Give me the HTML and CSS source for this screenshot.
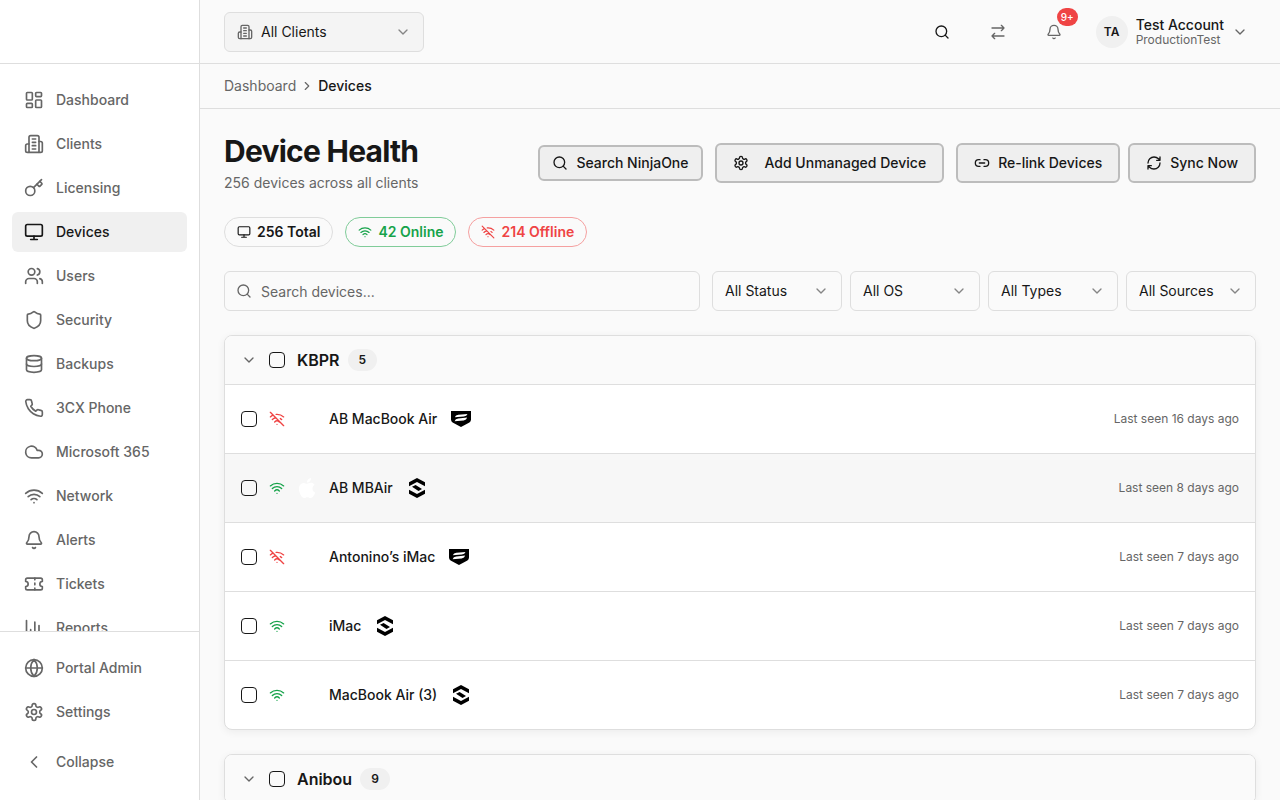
FILE: index.html
```html
<!DOCTYPE html>
<html lang="en">
<head>
<meta charset="utf-8">
<meta name="viewport" content="width=device-width, initial-scale=1">
<title>Device Health</title>
<link rel="stylesheet" href="styles.css">
</head>
<body>
<svg class="sprite" aria-hidden="true">
  <symbol id="dashboard" viewBox="0 0 24 24"><rect width="7" height="9" x="3" y="3" rx="1"/><rect width="7" height="5" x="14" y="3" rx="1"/><rect width="7" height="9" x="14" y="12" rx="1"/><rect width="7" height="5" x="3" y="16" rx="1"/></symbol>
  <symbol id="building" viewBox="0 0 24 24"><path d="M6 22V4a2 2 0 0 1 2-2h8a2 2 0 0 1 2 2v18Z"/><path d="M6 12H4a2 2 0 0 0-2 2v6a2 2 0 0 0 2 2h2"/><path d="M18 9h2a2 2 0 0 1 2 2v9a2 2 0 0 1-2 2h-2"/><path d="M10 6h4M10 10h4M10 14h4M10 18h4"/></symbol>
  <symbol id="key" viewBox="0 0 24 24"><path d="m15.5 7.5 2.3 2.3a1 1 0 0 0 1.4 0l2.1-2.1a1 1 0 0 0 0-1.4L19 4"/><path d="m21 2-9.6 9.6"/><circle cx="7.5" cy="15.5" r="5.5"/></symbol>
  <symbol id="monitor" viewBox="0 0 24 24"><rect width="20" height="14" x="2" y="3" rx="2"/><path d="M8 21h8M12 17v4"/></symbol>
  <symbol id="users" viewBox="0 0 24 24"><path d="M16 21v-2a4 4 0 0 0-4-4H6a4 4 0 0 0-4 4v2"/><circle cx="9" cy="7" r="4"/><path d="M22 21v-2a4 4 0 0 0-3-3.87M16 3.13a4 4 0 0 1 0 7.75"/></symbol>
  <symbol id="shield" viewBox="0 0 24 24"><path d="M20 13c0 5-3.5 7.5-7.66 8.95a1 1 0 0 1-.67-.01C7.5 20.5 4 18 4 13V6a1 1 0 0 1 1-1c2 0 4.5-1.2 6.24-2.72a1.17 1.17 0 0 1 1.52 0C14.51 3.81 17 5 19 5a1 1 0 0 1 1 1z"/></symbol>
  <symbol id="database" viewBox="0 0 24 24"><ellipse cx="12" cy="5" rx="9" ry="3"/><path d="M3 5v14a9 3 0 0 0 18 0V5"/><path d="M3 12a9 3 0 0 0 18 0"/></symbol>
  <symbol id="phone" viewBox="0 0 24 24"><path d="M22 16.92v3a2 2 0 0 1-2.18 2 19.79 19.79 0 0 1-8.63-3.07 19.5 19.5 0 0 1-6-6 19.79 19.79 0 0 1-3.07-8.67A2 2 0 0 1 4.11 2h3a2 2 0 0 1 2 1.72 12.84 12.84 0 0 0 .7 2.81 2 2 0 0 1-.45 2.11L8.09 9.91a16 16 0 0 0 6 6l1.27-1.27a2 2 0 0 1 2.11-.45 12.84 12.84 0 0 0 2.81.7A2 2 0 0 1 22 16.92z"/></symbol>
  <symbol id="cloud" viewBox="0 0 24 24"><path d="M17.5 19H9a7 7 0 1 1 6.71-9h1.79a4.5 4.5 0 1 1 0 9Z"/></symbol>
  <symbol id="wifi" viewBox="0 0 24 24"><path d="M12 20h.01M2 8.82a15 15 0 0 1 20 0M5 12.859a10 10 0 0 1 14 0M8.5 16.429a5 5 0 0 1 7 0"/></symbol>
  <symbol id="wifi-off" viewBox="0 0 24 24"><path d="M12 20h.01M8.5 16.429a5 5 0 0 1 7 0M5 12.859a10 10 0 0 1 5.17-2.69M19 12.859a10 10 0 0 0-2.007-1.523M2 8.82a15 15 0 0 1 4.177-2.643M22 8.82a15 15 0 0 0-11.288-3.764M2 2l20 20"/></symbol>
  <symbol id="bell" viewBox="0 0 24 24"><path d="M10.268 21a2 2 0 0 0 3.464 0"/><path d="M3.262 15.326A1 1 0 0 0 4 17h16a1 1 0 0 0 .74-1.673C19.41 13.956 18 12.499 18 8A6 6 0 0 0 6 8c0 4.499-1.411 5.956-2.738 7.326"/></symbol>
  <symbol id="ticket" viewBox="0 0 24 24"><path d="M2 9a3 3 0 0 1 0 6v2a2 2 0 0 0 2 2h16a2 2 0 0 0 2-2v-2a3 3 0 0 1 0-6V7a2 2 0 0 0-2-2H4a2 2 0 0 0-2 2Z"/><path d="M13 5v2M13 17v2M13 11v2"/></symbol>
  <symbol id="bars" viewBox="0 0 24 24"><path d="M3 3v16a2 2 0 0 0 2 2h16M8 17v-3M13 17V5M18 17V9"/></symbol>
  <symbol id="globe" viewBox="0 0 24 24"><circle cx="12" cy="12" r="10"/><path d="M12 2a14.5 14.5 0 0 0 0 20 14.5 14.5 0 0 0 0-20M2 12h20"/></symbol>
  <symbol id="gear" viewBox="0 0 24 24"><path d="M12.22 2h-.44a2 2 0 0 0-2 2v.18a2 2 0 0 1-1 1.73l-.43.25a2 2 0 0 1-2 0l-.15-.08a2 2 0 0 0-2.73.73l-.22.38a2 2 0 0 0 .73 2.73l.15.1a2 2 0 0 1 1 1.72v.51a2 2 0 0 1-1 1.74l-.15.09a2 2 0 0 0-.73 2.73l.22.38a2 2 0 0 0 2.73.73l.15-.08a2 2 0 0 1 2 0l.43.25a2 2 0 0 1 1 1.73V20a2 2 0 0 0 2 2h.44a2 2 0 0 0 2-2v-.18a2 2 0 0 1 1-1.73l.43-.25a2 2 0 0 1 2 0l.15.08a2 2 0 0 0 2.73-.73l.22-.39a2 2 0 0 0-.73-2.73l-.15-.08a2 2 0 0 1-1-1.74v-.5a2 2 0 0 1 1-1.74l.15-.09a2 2 0 0 0 .73-2.73l-.22-.38a2 2 0 0 0-2.73-.73l-.15.08a2 2 0 0 1-2 0l-.43-.25a2 2 0 0 1-1-1.73V4a2 2 0 0 0-2-2z"/><circle cx="12" cy="12" r="3"/></symbol>
  <symbol id="left" viewBox="0 0 24 24"><path d="m15 18-6-6 6-6"/></symbol>
  <symbol id="right" viewBox="0 0 24 24"><path d="m9 18 6-6-6-6"/></symbol>
  <symbol id="down" viewBox="0 0 24 24"><path d="m6 9 6 6 6-6"/></symbol>
  <symbol id="search" viewBox="0 0 24 24"><circle cx="11" cy="11" r="8"/><path d="m21 21-4.3-4.3"/></symbol>
  <symbol id="swap" viewBox="0 0 24 24"><path d="m17 2 4 4-4 4M3 6h18M7 22l-4-4 4-4M21 18H3"/></symbol>
  <symbol id="link" viewBox="0 0 24 24"><path d="M9 17H7A5 5 0 0 1 7 7h2M15 7h2a5 5 0 1 1 0 10h-2M8 12h8"/></symbol>
  <symbol id="sync" viewBox="0 0 24 24"><path d="M3 12a9 9 0 0 1 9-9 9.75 9.75 0 0 1 6.74 2.74L21 8M21 3v5h-5M21 12a9 9 0 0 1-9 9 9.75 9.75 0 0 1-6.74-2.74L3 16M8 16H3v5"/></symbol>
  <symbol id="apple" viewBox="0 0 24 24"><path d="M12.152 6.896c-.948 0-2.415-1.078-3.96-1.04-2.04.027-3.91 1.183-4.961 3.014-2.117 3.675-.546 9.103 1.519 12.09 1.013 1.454 2.208 3.09 3.792 3.039 1.52-.065 2.09-.987 3.935-.987 1.831 0 2.35.987 3.96.948 1.637-.026 2.676-1.48 3.676-2.948 1.156-1.688 1.636-3.325 1.662-3.415-.039-.013-3.182-1.221-3.22-4.857-.026-3.04 2.48-4.494 2.597-4.559-1.429-2.09-3.623-2.324-4.39-2.376-2-.156-3.675 1.09-4.61 1.09zM15.53 3.83c.843-1.012 1.4-2.427 1.245-3.83-1.207.052-2.662.805-3.532 1.818-.78.896-1.454 2.338-1.273 3.714 1.338.104 2.715-.688 3.559-1.701"/></symbol>
  <symbol id="badge-shield" viewBox="0 0 20 20"><path fill-rule="evenodd" d="M0 2H20V10.600Q20 12.500 18.400 13.400L10 18L1.600 13.400Q0 12.500 0 10.600ZM3.800 8.300Q4.600 6 7.300 5.700L16.500 5Q15.800 7.200 12.800 7.600ZM3.600 12.200Q4.400 9.900 7.200 9.500L16.200 8.600Q15.500 11.100 12.700 11.500Z"/></symbol>
  <symbol id="badge-hex" viewBox="0 0 20 20"><path d="M2 4.300 10 0l8 4.300v3.900l-8-4.100-8 4.100ZM5 8.700 8.600 6.900 15 10.900 11.500 13ZM2 11.800l8 4.100 8-4.100v3.900L10 20l-8-4.300Z"/></symbol>
</svg>

<div class="app">
  <aside class="sidebar">
    <div class="brand"></div>
    <nav class="nav" aria-label="Main">
      <a class="nav-item" href="#"><svg class="icon"><use href="#dashboard"/></svg>Dashboard</a>
      <a class="nav-item" href="#"><svg class="icon"><use href="#building"/></svg>Clients</a>
      <a class="nav-item" href="#"><svg class="icon"><use href="#key"/></svg>Licensing</a>
      <a class="nav-item active" href="#" aria-current="page"><svg class="icon"><use href="#monitor"/></svg>Devices</a>
      <a class="nav-item" href="#"><svg class="icon"><use href="#users"/></svg>Users</a>
      <a class="nav-item" href="#"><svg class="icon"><use href="#shield"/></svg>Security</a>
      <a class="nav-item" href="#"><svg class="icon"><use href="#database"/></svg>Backups</a>
      <a class="nav-item" href="#"><svg class="icon"><use href="#phone"/></svg>3CX Phone</a>
      <a class="nav-item" href="#"><svg class="icon"><use href="#cloud"/></svg>Microsoft 365</a>
      <a class="nav-item" href="#"><svg class="icon"><use href="#wifi"/></svg>Network</a>
      <a class="nav-item" href="#"><svg class="icon"><use href="#bell"/></svg>Alerts</a>
      <a class="nav-item" href="#"><svg class="icon"><use href="#ticket"/></svg>Tickets</a>
      <a class="nav-item" href="#"><svg class="icon"><use href="#bars"/></svg>Reports</a>
    </nav>
    <div class="nav-foot">
      <a class="nav-item" href="#"><svg class="icon"><use href="#globe"/></svg>Portal Admin</a>
      <a class="nav-item" href="#"><svg class="icon"><use href="#gear"/></svg>Settings</a>
      <button class="nav-item collapse" type="button"><svg class="icon"><use href="#left"/></svg>Collapse</button>
    </div>
  </aside>

  <div class="page">
    <header class="topbar">
      <div class="picker client-picker">
        <svg class="icon small lead"><use href="#building"/></svg>
        <select aria-label="Client"><option>All Clients</option></select>
        <svg class="icon small caret"><use href="#down"/></svg>
      </div>
      <div class="tools">
        <button class="tool dark" type="button" aria-label="Search"><svg class="icon small"><use href="#search"/></svg></button>
        <button class="tool" type="button" aria-label="Switch"><svg class="icon small"><use href="#swap"/></svg></button>
        <button class="tool" type="button" aria-label="Notifications"><svg class="icon small"><use href="#bell"/></svg><span class="count">9+</span></button>
        <button class="account" type="button">
          <span class="avatar">TA</span>
          <span class="who"><span class="who-name">Test Account</span><span class="who-org">ProductionTest</span></span>
          <svg class="icon small"><use href="#down"/></svg>
        </button>
      </div>
    </header>

    <nav class="crumbs" aria-label="Breadcrumb">
      <a href="#">Dashboard</a><svg class="icon tiny"><use href="#right"/></svg><span class="here">Devices</span>
    </nav>

    <main class="content">
      <div class="head">
        <div class="titles">
          <h1>Device Health</h1>
          <p>256 devices across all clients</p>
        </div>
        <div class="actions">
          <button class="btn compact" type="button"><svg class="icon small"><use href="#search"/></svg>Search NinjaOne</button>
          <button class="btn wide" type="button"><svg class="icon small"><use href="#gear"/></svg>Add Unmanaged Device</button>
          <div class="pair">
            <button class="btn" type="button"><svg class="icon small"><use href="#link"/></svg>Re-link Devices</button>
            <button class="btn" type="button"><svg class="icon small"><use href="#sync"/></svg>Sync Now</button>
          </div>
        </div>
      </div>

      <div class="chips">
        <span class="chip"><svg class="icon tiny"><use href="#monitor"/></svg>256 Total</span>
        <span class="chip green"><svg class="icon tiny"><use href="#wifi"/></svg>42 Online</span>
        <span class="chip red"><svg class="icon tiny"><use href="#wifi-off"/></svg>214 Offline</span>
      </div>

      <div class="filters">
        <div class="search">
          <svg class="icon small lead"><use href="#search"/></svg>
          <input type="search" placeholder="Search devices..." aria-label="Search devices">
        </div>
        <div class="selects">
          <div class="picker"><select aria-label="Status"><option>All Status</option></select><svg class="icon small caret"><use href="#down"/></svg></div>
          <div class="picker"><select aria-label="Operating system"><option>All OS</option></select><svg class="icon small caret"><use href="#down"/></svg></div>
          <div class="picker"><select aria-label="Type"><option>All Types</option></select><svg class="icon small caret"><use href="#down"/></svg></div>
          <div class="picker"><select aria-label="Source"><option>All Sources</option></select><svg class="icon small caret"><use href="#down"/></svg></div>
        </div>
      </div>

      <section class="card">
        <div class="group">
          <svg class="icon small muted"><use href="#down"/></svg>
          <input type="checkbox" aria-label="Select all KBPR devices">
          <div class="group-title"><h2>KBPR</h2><span class="tally">5</span></div>
        </div>
        <ul class="devices">
          <li class="device"><input type="checkbox" aria-label="Select AB MacBook Air"><svg class="icon small red"><use href="#wifi-off"/></svg><svg class="os"><use href="#apple"/></svg><span class="name">AB MacBook Air</span><svg class="source"><use href="#badge-shield"/></svg><span class="seen">Last seen 16 days ago</span></li>
          <li class="device hovered"><input type="checkbox" aria-label="Select AB MBAir"><svg class="icon small green"><use href="#wifi"/></svg><svg class="os"><use href="#apple"/></svg><span class="name">AB MBAir</span><svg class="source"><use href="#badge-hex"/></svg><span class="seen">Last seen 8 days ago</span></li>
          <li class="device"><input type="checkbox" aria-label="Select Antonino’s iMac"><svg class="icon small red"><use href="#wifi-off"/></svg><svg class="os"><use href="#apple"/></svg><span class="name">Antonino’s iMac</span><svg class="source"><use href="#badge-shield"/></svg><span class="seen">Last seen 7 days ago</span></li>
          <li class="device"><input type="checkbox" aria-label="Select iMac"><svg class="icon small green"><use href="#wifi"/></svg><svg class="os"><use href="#apple"/></svg><span class="name">iMac</span><svg class="source"><use href="#badge-hex"/></svg><span class="seen">Last seen 7 days ago</span></li>
          <li class="device"><input type="checkbox" aria-label="Select MacBook Air (3)"><svg class="icon small green"><use href="#wifi"/></svg><svg class="os"><use href="#apple"/></svg><span class="name">MacBook Air (3)</span><svg class="source"><use href="#badge-hex"/></svg><span class="seen">Last seen 7 days ago</span></li>
        </ul>
      </section>

      <section class="card">
        <div class="group">
          <svg class="icon small muted"><use href="#down"/></svg>
          <input type="checkbox" aria-label="Select all Anibou devices">
          <div class="group-title"><h2>Anibou</h2><span class="tally">9</span></div>
        </div>
      </section>
    </main>
  </div>
</div>
</body>
</html>
```
FILE: styles.css
```css
:root {
  --ink: #171717;
  --muted: #666666;
  --line: #dedede;
  --canvas: #fafafa;
  --soft: #f0f0f0;
  --green: #16a34a;
  --red: #ef4444;
}

*, *::before, *::after { box-sizing: border-box; }

body {
  margin: 0;
  font: 14px/20px Inter, "Liberation Sans", sans-serif;
  color: var(--ink);
  background: var(--canvas);
}

h1, h2, p, ul { margin: 0; padding: 0; }
ul { list-style: none; }
a { color: inherit; text-decoration: none; }
button, input, select { font: inherit; color: inherit; }
button { border: 0; background: none; cursor: pointer; }

.sprite { display: none; }

.icon {
  width: 20px;
  height: 20px;
  flex: none;
  fill: none;
  stroke: currentColor;
  stroke-width: 2;
  stroke-linecap: round;
  stroke-linejoin: round;
}
.icon.small { width: 16px; height: 16px; }
.icon.tiny { width: 14px; height: 14px; }
.muted { color: var(--muted); }
.green { color: var(--green); }
.red { color: var(--red); }

.app { display: flex; height: 100vh; }

/* Sidebar */
.sidebar {
  width: 200px;
  flex: none;
  display: flex;
  flex-direction: column;
  background: #fff;
  border-right: 1px solid var(--line);
}
.brand { height: 64px; flex: none; border-bottom: 1px solid var(--line); }
.nav, .nav-foot {
  display: flex;
  flex-direction: column;
  gap: 4px;
  padding: 16px 12px;
}
.nav { flex: 1; min-height: 0; overflow-y: auto; scrollbar-width: none; }
.nav-foot { border-top: 1px solid var(--line); }
.nav-item {
  display: flex;
  align-items: center;
  gap: 12px;
  height: 40px;
  flex: none;
  padding: 0 12px;
  border-radius: 6px;
  font-weight: 500;
  color: var(--muted);
}
.nav-item.active { background: var(--soft); color: var(--ink); }
.collapse { margin-top: 6px; margin-bottom: 2px; }

/* Top bar */
.page { flex: 1; min-width: 0; display: flex; flex-direction: column; }
.topbar {
  display: flex;
  align-items: center;
  justify-content: space-between;
  height: 64px;
  flex: none;
  padding: 0 24px;
  border-bottom: 1px solid var(--line);
}
.picker { position: relative; width: 130px; color: var(--ink); }
.picker select {
  display: block;
  width: 100%;
  height: 40px;
  padding: 0 36px 0 12px;
  border: 1px solid var(--line);
  border-radius: 6px;
  background: transparent;
  appearance: none;
}
.caret { position: absolute; right: 13px; top: 12px; color: #858585; pointer-events: none; }
.lead { position: absolute; left: 12px; top: 12px; color: var(--muted); pointer-events: none; }
.client-picker { width: 200px; }
.client-picker .lead { left: 13px; }
.client-picker select { padding-left: 36px; background: #f4f4f4; }

.tools { display: flex; align-items: center; gap: 12px; }
.tool {
  position: relative;
  display: grid;
  place-items: center;
  width: 44px;
  height: 44px;
  padding: 0;
  color: var(--muted);
}
.tool.dark { color: var(--ink); }
.count {
  position: absolute;
  top: -2px;
  right: -2px;
  padding: 0 4px;
  border-radius: 9px;
  background: var(--red);
  color: #fff;
  font-size: 10px;
  line-height: 18px;
  font-weight: 500;
}
.account { display: flex; align-items: center; gap: 8px; padding: 0 8px; color: var(--muted); text-align: left; }
.avatar {
  display: grid;
  place-items: center;
  width: 32px;
  height: 32px;
  border-radius: 50%;
  background: var(--soft);
  color: var(--ink);
  font-size: 12px;
  font-weight: 600;
}
.who { display: flex; flex-direction: column; line-height: 15px; }
.who-name { font-weight: 500; color: var(--ink); }
.who-org { font-size: 12px; }

.crumbs {
  display: flex;
  align-items: center;
  gap: 4px;
  flex: none;
  padding: 12px 24px;
  border-bottom: 1px solid var(--line);
  color: var(--muted);
}
.here { font-weight: 500; color: var(--ink); }

/* Content */
.content {
  flex: 1;
  min-height: 0;
  overflow-y: auto;
  scrollbar-width: none;
  display: flex;
  flex-direction: column;
  gap: 24px;
  padding: 24px;
}
.content > * { flex: none; }
.head { display: flex; align-items: center; justify-content: space-between; gap: 16px; }
.titles { display: flex; flex-direction: column; gap: 4px; color: var(--muted); }
h1 { font-size: 30px; line-height: 36px; font-weight: 700; letter-spacing: -0.025em; color: var(--ink); }
.actions { display: flex; align-items: center; gap: 12px; }
.pair { display: flex; gap: 8px; }
.btn {
  display: flex;
  align-items: center;
  gap: 8px;
  height: 40px;
  padding: 0 16px;
  border: 2px solid #bcbcbc;
  border-radius: 6px;
  background: #efefef;
  font-weight: 500;
  white-space: nowrap;
}
.btn.compact { height: 36px; padding: 0 12px; }
.btn.wide { gap: 16px; }

.chips { display: flex; gap: 12px; }
.chip {
  display: flex;
  align-items: center;
  gap: 6px;
  padding: 4px 12px;
  border: 1px solid var(--line);
  border-radius: 15px;
  font-weight: 600;
}
.chip.green { border-color: #80cc99; }
.chip.red { border-color: #f5a0a0; }

.filters { display: flex; gap: 12px; }
.search { position: relative; flex: 1; }
.search input {
  display: block;
  width: 100%;
  height: 40px;
  padding: 0 12px 0 36px;
  border: 1px solid var(--line);
  border-radius: 6px;
  background: transparent;
  appearance: none;
}
.search input::placeholder { color: var(--muted); opacity: 1; }
.selects { display: flex; gap: 8px; }

.card {
  overflow: hidden;
  border: 1px solid var(--line);
  border-radius: 8px;
  background: #fff;
  box-shadow: 0 2px 8px rgba(0, 0, 0, 0.06);
}
.group, .device { display: flex; align-items: center; gap: 12px; padding: 0 16px; }
.group { height: 48px; background: var(--canvas); }
.group-title { display: flex; align-items: center; gap: 8px; }
h2 { font-size: 16px; line-height: 24px; font-weight: 600; }
.tally {
  padding: 0 11px;
  border-radius: 11px;
  background: var(--soft);
  font-size: 12px;
  line-height: 22px;
  font-weight: 600;
}
.device { height: 69px; border-top: 1px solid var(--line); }
.device.hovered { background: #f7f7f7; }
input[type="checkbox"] {
  width: 16px;
  height: 16px;
  flex: none;
  margin: 0;
  border: 1px solid var(--ink);
  border-radius: 4px;
  appearance: none;
}
.os { width: 20px; height: 20px; flex: none; fill: #fff; }
.name { font-weight: 500; }
.source { width: 20px; height: 20px; flex: none; margin-left: 2px; fill: #000; }
.seen { margin-left: auto; font-size: 12px; color: var(--muted); }
```
